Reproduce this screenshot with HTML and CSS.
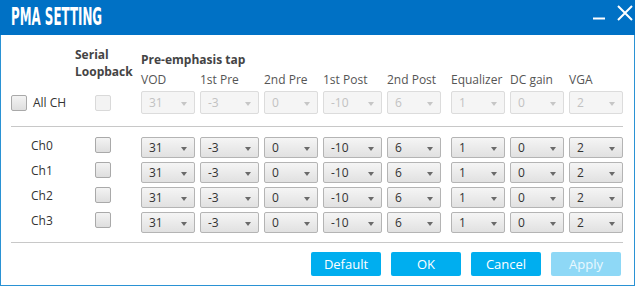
FILE: index.html
```html
<!DOCTYPE html>
<html lang="en">
<head>
  <meta charset="UTF-8">
  <title>PMA Setting</title>
  <link rel="stylesheet" href="styles.css">
</head>
<body>

  <div class="window">
    <div class="titlebar">
      <span class="title">PMA SETTING</span>
      <span class="controls">
        <svg class="min" width="13" height="12" viewBox="0 0 13 12"><path d="M0 8.5H12" stroke="#fff" stroke-width="2"/></svg>
        <svg class="close" width="16" height="16" viewBox="0 0 16 16"><path d="M1 1L15 15M15 1L1 15" stroke="#fff" stroke-width="2"/></svg>
      </span>
    </div>

    <div class="panel">
      <div class="grid head">
        <div class="loopback">Serial<br>Loopback</div>
        <div class="tap">Pre-emphasis tap</div>
        <div class="col col3">VOD</div>
        <div class="col col4">1st Pre</div>
        <div class="col col5">2nd Pre</div>
        <div class="col col6">1st Post</div>
        <div class="col col7">2nd Post</div>
        <div class="col col8">Equalizer</div>
        <div class="col col9">DC gain</div>
        <div class="col col10">VGA</div>
      </div>

      <div class="grid allrow">
        <label class="allch"><span class="box"></span>All CH</label>
        <span class="box off"></span>
        <div class="combo off">31</div>
        <div class="combo off">-3</div>
        <div class="combo off">0</div>
        <div class="combo off">-10</div>
        <div class="combo off narrow">6</div>
        <div class="combo off">1</div>
        <div class="combo off">0</div>
        <div class="combo off">2</div>
      </div>

      <div class="sep top"></div>

      <div class="grid rows" id="rows"></div>

      <div class="sep bottom"></div>

      <div class="buttons">
        <button class="btn">Default</button>
        <button class="btn">OK</button>
        <button class="btn">Cancel</button>
        <button class="btn" disabled>Apply</button>
      </div>
    </div>
  </div>

  <script>
    const values = ["31", "-3", "0", "-10", "6", "1", "0", "2"];
    const rows = document.getElementById("rows");

    for (let ch = 0; ch < 4; ch++) {
      let html = '<div class="ch">Ch' + ch + '</div><span class="box"></span>';
      values.forEach((v, i) => {
        html += '<div class="combo' + (i === 4 ? ' narrow' : '') + '">' + v + '</div>';
      });
      rows.insertAdjacentHTML("beforeend", html);
    }
  </script>

</body>
</html>
```

FILE: styles.css
```css
body {
  margin: 0;
  background: #fff;
  font-family: "Open Sans", "Noto Sans", sans-serif;
  font-size: 12px;
  color: #333;
}
.window {
  width: 635px;
  height: 286px;
  box-sizing: border-box;
  border: 1px solid #2a92d4;
  border-top: 0;
}
.titlebar {
  height: 35px;
  margin: 0 -1px;
  background: #0071c5;
  display: flex;
  align-items: flex-start;
  justify-content: space-between;
  overflow: hidden;
}
.title {
  display: inline-block;
  margin: 2px 0 0 11px;
  font-family: "DejaVu Sans Condensed", "DejaVu Sans", sans-serif;
  font-weight: bold;
  font-size: 24px;
  line-height: 30px;
  color: #fff;
  transform: scaleX(0.55) scaleY(1.04);
  transform-origin: left center;
  white-space: nowrap;
}
.controls {
  display: flex;
  align-items: flex-start;
  gap: 11px;
  margin: 5px 2px 0 0;
}
.controls .min {
  margin-top: 5px;
}
.panel {
  padding: 0 11px 0 10px;
}
.grid {
  display: grid;
  grid-template-columns: 59px 61px 54px 59px 54px 59px 59px 54px 54px 54px;
  column-gap: 5px;
}
.head {
  margin-top: 11px;
  grid-template-rows: 22px 20px;
  color: #444;
}
.loopback {
  grid-column: 2;
  grid-row: 1 / span 2;
  font-weight: bold;
  line-height: 17px;
}
.tap {
  grid-column: 3 / -1;
  grid-row: 1;
  padding-top: 5px;
  font-weight: bold;
  line-height: 17px;
}
.col {
  grid-row: 2;
  padding-top: 3px;
  line-height: 17px;
  white-space: nowrap;
  color: #555;
}
.col3 { grid-column: 3; }
.col4 { grid-column: 4; }
.col5 { grid-column: 5; }
.col6 { grid-column: 6; }
.col7 { grid-column: 7; }
.col8 { grid-column: 8; }
.col9 { grid-column: 9; }
.col10 { grid-column: 10; }

.allrow {
  margin-top: 3px;
  height: 23px;
  align-items: center;
}
.allrow .combo {
  height: 23px;
}
.allch {
  display: flex;
  align-items: center;
  gap: 6px;
}
.allrow > .box {
  margin-left: 20px;
}

.box {
  display: block;
  width: 16px;
  height: 16px;
  box-sizing: border-box;
  border: 1px solid #a9a9a9;
  border-radius: 2px;
  background: linear-gradient(#f3f3f3, #dedede);
}
.box.off {
  border-color: #d9d9d9;
  background: #f3f3f3;
}

.combo {
  position: relative;
  height: 21px;
  box-sizing: border-box;
  padding-left: 7px;
  border: 1px solid #b4b4b4;
  border-radius: 2px;
  background: linear-gradient(#f5f5f5, #e1e1e1);
  display: flex;
  align-items: center;
  color: #333;
}
.combo::after {
  content: "";
  position: absolute;
  right: 7px;
  top: 50%;
  margin-top: -1px;
  border-left: 3px solid transparent;
  border-right: 3px solid transparent;
  border-top: 4px solid #6a6a6a;
}
.combo.narrow {
  width: 54px;
}
.combo.off {
  border-color: #dcdcdc;
  background: #f5f5f5;
  color: #c2c2c2;
}
.combo.off::after {
  border-top-color: #c6c6c6;
}

.sep {
  height: 1px;
  background: #c8c8c8;
}
.sep.top {
  margin: 12px 0 10px;
}
.sep.bottom {
  margin: 9px 0 9px;
}

.rows {
  grid-auto-rows: 21px;
  row-gap: 4px;
}
.ch {
  padding-left: 20px;
  line-height: 17px;
}
.rows > .box {
  margin-left: 20px;
}

.buttons {
  display: flex;
  justify-content: flex-end;
  gap: 10px;
  margin-right: 2px;
}
.btn {
  width: 70px;
  height: 24px;
  border: 0;
  border-radius: 2px;
  background: #00aeef;
  color: #fff;
  font-family: "Open Sans", "Noto Sans", sans-serif;
  font-size: 13px;
  padding: 0;
}
.btn:disabled {
  background: #8ed8f6;
  color: #eaf8fe;
}
```
